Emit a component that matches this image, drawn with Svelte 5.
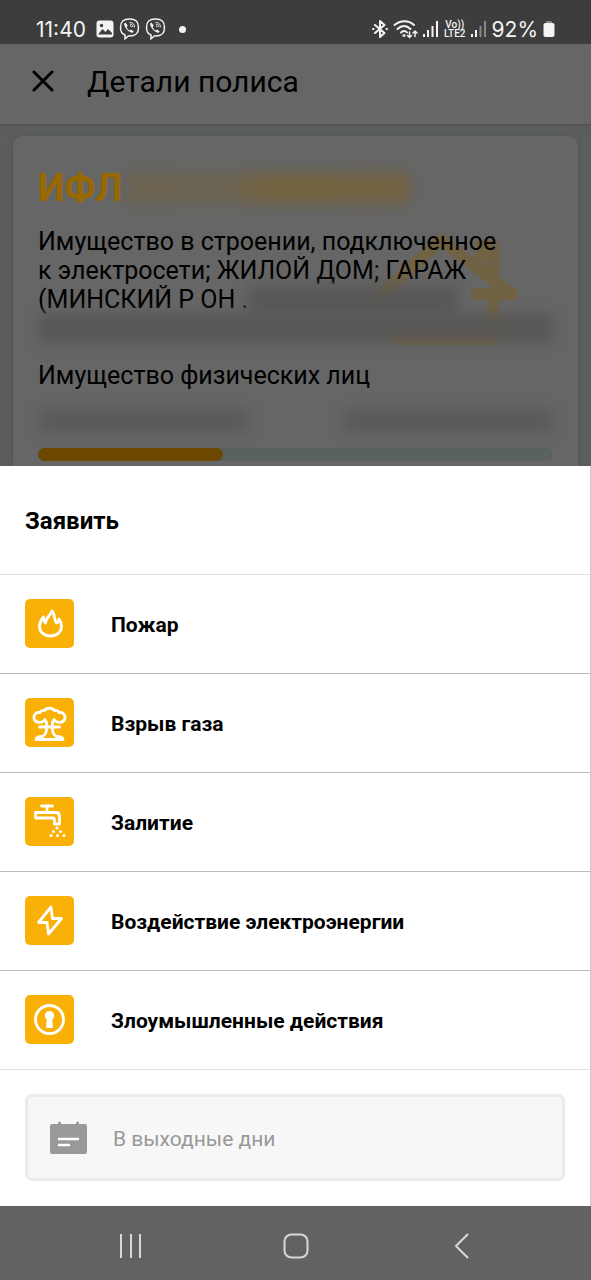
<script>
    // Share of the policy period that has passed
    const progress = 36;

    const claims = [
        { icon: 'fire', name: 'Пожар' },
        { icon: 'blast', name: 'Взрыв газа' },
        { icon: 'water', name: 'Залитие' },
        { icon: 'power', name: 'Воздействие электроэнергии' },
        { icon: 'lock', name: 'Злоумышленные действия' }
    ];
</script>

<div class="screen">
    <div class="status-bar">
        <div class="status-group">
            <span class="status-text clock">11:40</span>
            <svg width="18" height="18" viewBox="0 0 18 18">
                <rect x="0.5" y="0.5" width="17" height="17" rx="3" fill="#f4f4f4" />
                <circle cx="5.5" cy="5.5" r="1.7" fill="#3d3d3d" />
                <path d="M2 14.5 6.5 9l3 3 2.5-3 4 4v1.5z" fill="#3d3d3d" />
            </svg>
            {#each [1, 2] as call (call)}
                <svg width="21" height="22" viewBox="0 0 20 22" fill="none" stroke="#f4f4f4">
                    <path d="M10 1C3.500 1 1 3.500 1 9.500c0 4.500 1.500 6.500 4.500 7.500v3.800L8.800 18H10c6.500 0 9-2.500 9-8.500S16.500 1 10 1z" stroke-width="1.500" />
                    <path d="M5.800 4.600c-1 .5-1.400 1.400-1 2.500 1.200 3.400 3.300 5.900 6.800 7.500 1.200.5 2-.1 2.600-1.100l-2.600-2-1.200 1c-1.600-.7-2.700-2-3.200-3.600l1-1.300z" fill="#f4f4f4" stroke="none" />
                    <path d="M10 4.300c3.200.1 5 2 5.100 5M10.300 6.100c2 .1 3 1.200 3.100 3M10.500 7.800c.8.100 1.200.5 1.300 1.300" stroke-width="0.900" />
                </svg>
            {/each}
            <span class="dot"></span>
        </div>
        <div class="status-group">
            <svg width="16" height="18" viewBox="0 0 16 18" fill="none" stroke="#f4f4f4" stroke-width="2" stroke-linejoin="round" stroke-linecap="round">
                <path d="m3 5 9.500 8L8 17V1l4.500 4L3 13M1 9h.5M14.500 9h.5" />
            </svg>
            <svg width="25" height="19" viewBox="0 0 25 19" fill="none" stroke="#f4f4f4" stroke-width="2" stroke-linecap="round">
                <path d="M1.500 5c6-5 14-5 19.500 0M4.500 9c4-4 9-4 13 0M8 12.500c2-2 4.500-2 6 0" />
                <circle cx="11" cy="15.500" r="0.600" />
                <path d="M16.500 12v5.500m-2-2 2 2 2-2M22 16.500V11m-2 2 2-2 2 2" stroke-width="1.500" />
            </svg>
            <svg width="16" height="18" viewBox="0 0 16 18" fill="#f4f4f4">
                <path d="M0 14h2v3H0zM4 10h2v7H4zM8.500 6h2v11h-2zM13 1h2v16h-2z" />
            </svg>
            <span class="network"><span>Vo))</span><span>LTE2</span></span>
            <svg width="16" height="18" viewBox="0 0 16 18" fill="#f4f4f4">
                <path d="M0 14h2v3H0zM4 10h2v7H4z" />
                <path d="M8.500 6h2v11h-2zM13 1h2v16h-2z" opacity="0.400" />
            </svg>
            <span class="status-text">92%</span>
            <svg width="12" height="18" viewBox="0 0 12 18">
                <rect x="3" y="1" width="6" height="3" rx="1" fill="#8a8a8a" />
                <rect x="0.500" y="3" width="11" height="14" rx="2" fill="#f4f4f4" />
            </svg>
        </div>
    </div>

    <header class="header">
        <button class="close" aria-label="Закрыть">
            <svg width="22" height="22" viewBox="0 0 22 22" fill="none" stroke="#000" stroke-width="3" stroke-linecap="round">
                <path d="m2 2 18 18M20 2 2 20" />
            </svg>
        </button>
        <h1>Детали полиса</h1>
    </header>

    <main class="backdrop">
        <section class="card">
            <svg class="house" width="146" height="120" viewBox="0 0 146 120" fill="none" stroke="#716244" stroke-width="12" stroke-linejoin="round" stroke-linecap="round">
                <path d="M8 66 67 12l71 54h-36M119 46V18h-12v12M119 66v45H22" />
            </svg>
            <div class="number">
                <span>ИФЛ</span>
                <span class="smudge gold"></span>
            </div>
            <div class="description">
                <p>Имущество в строении, подключенное<br />к электросети; ЖИЛОЙ ДОМ; ГАРАЖ</p>
                <div class="address">
                    <span>(МИНСКИЙ Р ОН .</span>
                    <span class="smudge street"></span>
                </div>
                <div class="smudge full"></div>
            </div>
            <p class="kind">Имущество физических лиц</p>
            <div class="dates">
                <span class="smudge date"></span>
                <span class="smudge date"></span>
            </div>
            <div class="track">
                <div class="fill" style="width: {progress}%"></div>
            </div>
        </section>
    </main>

    <section class="sheet">
        <h2>Заявить</h2>
        <div class="claims">
            {#each claims as claim (claim.icon)}
                <button class="claim">
                    <svg class="tile" width="49" height="49" viewBox="0 0 49 49">
                        {#if claim.icon === 'fire'}
                            <path d="M18.500 18C15.500 21.500 14.500 24.500 14.500 27.500c0 5.500 5 9.500 11 9.500s11-4 11-9.500c0-3-1-5.500-2.500-7.500-.2 2-1 3.500-2.500 4C29 22 30.500 15.500 27 12c-.5 3.500-6 6-6.500 12-1.500-1-2-3.500-2-6z" />
                        {:else if claim.icon === 'blast'}
                            <path d="M17 24c-4 1-8-.5-8-4.500 0-3.500 2.500-5.500 6-5 1-2 2.500-2.500 4.500-2 2-3 8-3 10 0 2-.5 3.500 0 4.500 2 3.500-.5 6 1.500 6 5 0 4-4 5.500-8 4.500M17 24c1.500-.2 2.500-1.200 3-2.500M32 24c-1.500-.2-2.500-1.200-3-2.500M21.500 24v7c0 4-1.500 6-4 7.500M27.500 24v7c0 4 1.500 6 4 7.500M14.500 29h20M11 41c1-1.800 3-2.500 6-2.500M38 41c-1-1.800-3-2.500-6-2.500M11 41.500h27" />
                        {:else if claim.icon === 'water'}
                            <path d="M16.500 9h11M22 9v6M10.500 15.500H31c2.500 0 3.500 1.500 3.500 4V27h-5v-4c0-1.500-.5-2-2-2h-17z" />
                            <g class="solid">
                                <circle cx="32" cy="31" r="1.500" />
                                <circle cx="28.500" cy="34.500" r="1.500" />
                                <circle cx="35.500" cy="34.500" r="1.500" />
                                <circle cx="26" cy="38.500" r="1.500" />
                                <circle cx="32.500" cy="38.500" r="1.500" />
                                <circle cx="39" cy="38.500" r="1.500" />
                            </g>
                        {:else if claim.icon === 'power'}
                            <path d="M26 11 13.500 26.500H22L23.500 38l13-15.500h-9z" />
                        {:else}
                            <circle cx="24.500" cy="24.500" r="14" />
                            <path class="solid" d="M24.500 16a4.700 4.700 0 0 0-2.700 8.500L21 33h7l-.8-8.500A4.700 4.700 0 0 0 24.500 16z" />
                        {/if}
                    </svg>
                    <span>{claim.name}</span>
                </button>
            {/each}
        </div>
        <div class="footer">
            <button class="weekend">
                <svg width="37" height="34" viewBox="0 0 37 34">
                    <path d="M2 3h6V2a1.500 1.500 0 0 1 3 0v1h15V2a1.500 1.500 0 0 1 3 0v1h6q2 0 2 2v26q0 2-2 2H2q-2 0-2-2V5q0-2 2-2z" fill="#999" />
                    <path d="M8 18h21M8 24h12" stroke="#fff" stroke-width="2.400" />
                </svg>
                <span>В выходные дни</span>
            </button>
        </div>
    </section>

    <nav class="nav-bar">
        <button aria-label="Последние">
            <svg width="26" height="26" viewBox="0 0 26 26" fill="none" stroke="#d8d8d8" stroke-width="2">
                <path d="M3 1v24M13 1v24M22 1v24" />
            </svg>
        </button>
        <button aria-label="Домой">
            <svg width="26" height="26" viewBox="0 0 26 26" fill="none" stroke="#d8d8d8" stroke-width="2">
                <rect x="1.500" y="1.500" width="23" height="23" rx="7" />
            </svg>
        </button>
        <button aria-label="Назад">
            <svg width="26" height="26" viewBox="0 0 26 26" fill="none" stroke="#d8d8d8" stroke-width="2">
                <path d="M20 1 8 13l12 12" />
            </svg>
        </button>
    </nav>
</div>

<style>
    :global(body) {
        margin: 0;
        background: #626262;
    }

    .screen {
        display: flex;
        flex-direction: column;
        min-height: 100vh;
        font-family: Roboto, "Noto Sans", sans-serif;
        color: #000;
    }

    h1, h2, p {
        margin: 0;
    }

    button {
        padding: 0;
        border: none;
        background: none;
        font: inherit;
        color: inherit;
        cursor: pointer;
    }

    svg {
        display: block;
        flex-shrink: 0;
    }

    /* System status bar */
    .status-bar {
        display: flex;
        justify-content: space-between;
        box-sizing: border-box;
        height: 44px;
        padding: 14px 36px 0;
        background: #3d3d3d;
        color: #f4f4f4;
    }

    .status-group {
        display: flex;
        align-items: center;
        gap: 5px;
        height: 30px;
    }

    .status-text {
        font-family: Inter, sans-serif;
        font-size: 21px;
    }

    .clock {
        margin-right: 5px;
    }

    .dot {
        width: 7px;
        height: 7px;
        margin-left: 8px;
        border-radius: 50%;
        background: #f4f4f4;
    }

    .network {
        display: flex;
        flex-direction: column;
        align-items: center;
        font-size: 10px;
        font-weight: 500;
        line-height: 9px;
    }

    /* Page behind the sheet, already dimmed */
    .header {
        display: flex;
        align-items: center;
        gap: 33px;
        box-sizing: border-box;
        height: 80px;
        padding: 0 32px 4px;
        background: #666;
        box-shadow: 0 1px 3px #4f4f4f;
        z-index: 1;
    }

    h1 {
        font-size: 30px;
        font-weight: 400;
        line-height: 40px;
    }

    .close {
        padding-bottom: 2px;
    }

    .backdrop {
        flex: 1;
        padding: 12px 13px 0;
        background: #5b5e5d;
    }

    .card {
        position: relative;
        padding: 30px 25px 5px;
        border-radius: 10px 10px 0 0;
        background: #666;
        box-shadow: 0 1px 5px #4f5151;
    }

    .house {
        position: absolute;
        top: 92px;
        right: 58px;
    }

    .number,
    .address {
        display: flex;
        align-items: center;
    }

    .number {
        font-size: 38px;
        font-weight: 700;
        line-height: 44px;
        color: #996900;
    }

    .description,
    .kind {
        position: relative;
        font-size: 25px;
        line-height: 29px;
    }

    .description {
        margin-top: 17px;
    }

    .kind {
        margin-top: 18px;
    }

    .smudge {
        background: #585755;
        filter: blur(7px);
    }

    .gold {
        width: 284px;
        height: 30px;
        margin-left: 4px;
        background: linear-gradient(90deg, #6d6350, #6c6453 35%, #756341 50%, #746241);
    }

    .street {
        width: 210px;
        height: 28px;
    }

    .full {
        height: 29px;
    }

    .dates {
        display: flex;
        justify-content: space-between;
        margin-top: 19px;
    }

    .date {
        width: 210px;
        height: 24px;
        background: #5a5a5a;
    }

    .track {
        height: 13px;
        margin-top: 15px;
        border-radius: 7px;
        background: #5a6161;
    }

    .fill {
        height: 100%;
        border-radius: 7px;
        background: #6b4700;
    }

    /* Bottom sheet */
    .sheet {
        position: relative;
        border-right: 1px solid #ccc;
        background: #fff;
    }

    h2 {
        padding: 41px 25px 39px;
        border-bottom: 1px solid #e2e2e2;
        font-size: 24px;
        font-weight: 700;
        line-height: 28px;
    }

    .claim {
        display: flex;
        align-items: center;
        gap: 37px;
        box-sizing: border-box;
        width: 100%;
        height: 99px;
        padding: 0 25px 1px;
        border-bottom: 1px solid #bcbcbc;
        font-size: 21px;
        font-weight: 700;
        text-align: left;
    }

    .claim span,
    .weekend span {
        padding-top: 2px;
    }

    .claim:last-child {
        border-bottom-color: #e2e2e2;
    }

    .tile {
        border-radius: 5px;
        background: #f9b107;
        fill: none;
        stroke: #fff;
        stroke-width: 2.8;
        stroke-linejoin: round;
        stroke-linecap: round;
    }

    .solid {
        fill: #fff;
        stroke: none;
    }

    .footer {
        padding: 24px 25px 25px;
    }

    .weekend {
        display: flex;
        align-items: center;
        gap: 26px;
        box-sizing: border-box;
        width: 100%;
        height: 87px;
        padding: 0 22px;
        border: 3px solid #ebebeb;
        border-radius: 7px;
        background: #f7f7f7;
        color: #999;
        font-size: 21px;
    }

    /* System navigation */
    .nav-bar {
        display: grid;
        grid-template-columns: repeat(3, 1fr);
        height: 74px;
        padding: 0 48px;
        background: #626262;
    }

    .nav-bar button {
        display: flex;
        align-items: center;
        justify-content: center;
        padding-top: 5px;
    }
</style>
